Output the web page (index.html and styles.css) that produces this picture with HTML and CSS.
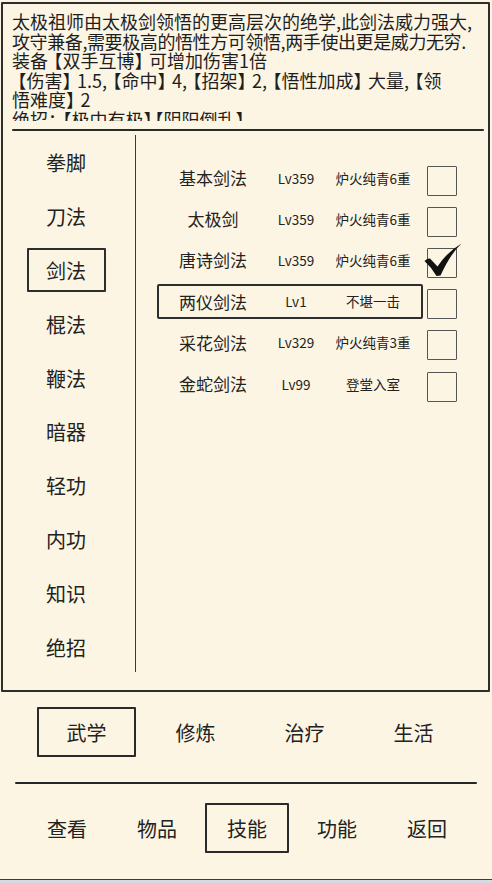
FILE: index.html
```html
<!DOCTYPE html>
<html lang="zh-CN">
<head>
<meta charset="UTF-8">
<meta name="viewport" content="width=device-width, initial-scale=1.0">
<title>技能 - 武学</title>
<link rel="stylesheet" href="styles.css">
</head>
<body>
<div class="frame">
	<div class="desc">
		太极祖师由太极剑领悟的更高层次的绝学,此剑法威力强大,<br>
		<span class="tight">攻守兼备,需要极高的悟性方可领悟,两手使出更是威力无穷.</span><br>
		装备<i class="l">【</i>双手互博<i class="r">】</i>可增加伤害1倍<br>
		<i class="l">【</i>伤害<i class="r">】</i>1.5,<i class="l">【</i>命中<i class="r">】</i>4,<i class="l">【</i>招架<i class="r">】</i>2,<i class="l">【</i>悟性加成<i class="r">】</i>大量,<i class="l">【</i>领<br>
		悟难度<i class="r">】</i>2<br>
		绝招：<i class="l">【</i>极中有极<i class="r">】</i><i class="l">【</i>阴阳倒乱<i class="r">】</i>
	</div>
	<div class="rule"></div>
	<div class="body">
		<ul class="kinds">
			<li><span>拳脚</span></li>
			<li><span>刀法</span></li>
			<li class="on"><span>剑法</span></li>
			<li><span>棍法</span></li>
			<li><span>鞭法</span></li>
			<li><span>暗器</span></li>
			<li><span>轻功</span></li>
			<li><span>内功</span></li>
			<li><span>知识</span></li>
			<li><span>绝招</span></li>
		</ul>
		<div class="skills">
			<div class="row">
				<div class="info"><span class="name">基本剑法</span><span class="lv">Lv359</span><span class="rank">炉火纯青6重</span></div>
				<span class="box"></span>
			</div>
			<div class="row">
				<div class="info"><span class="name">太极剑</span><span class="lv">Lv359</span><span class="rank">炉火纯青6重</span></div>
				<span class="box"></span>
			</div>
			<div class="row">
				<div class="info"><span class="name">唐诗剑法</span><span class="lv">Lv359</span><span class="rank">炉火纯青6重</span></div>
				<span class="box">
					<svg class="tick" width="38" height="34" viewBox="0 0 38 34"><path d="M0.5 18 Q3 15 6 15.5 L13.5 23.5 Q23 9 37.5 0.5 Q27 10 16.5 32.5 L12.5 33 Q8 25 0.5 18 Z" fill="#111"/></svg>
				</span>
			</div>
			<div class="row on">
				<div class="info"><span class="name">两仪剑法</span><span class="lv">Lv1</span><span class="rank">不堪一击</span></div>
				<span class="box"></span>
			</div>
			<div class="row">
				<div class="info"><span class="name">采花剑法</span><span class="lv">Lv329</span><span class="rank">炉火纯青3重</span></div>
				<span class="box"></span>
			</div>
			<div class="row">
				<div class="info"><span class="name">金蛇剑法</span><span class="lv">Lv99</span><span class="rank">登堂入室</span></div>
				<span class="box"></span>
			</div>
		</div>
	</div>
</div>

<div class="tabs">
	<span class="on">武学</span>
	<span>修炼</span>
	<span>治疗</span>
	<span>生活</span>
</div>

<div class="line"></div>

<div class="nav">
	<span>查看</span>
	<span>物品</span>
	<span class="on">技能</span>
	<span>功能</span>
	<span>返回</span>
</div>

<div class="strip"></div>
</body>
</html>
```

FILE: styles.css
```css
html, body {
	margin: 0;
	padding: 0;
}
body {
	width: 492px;
	height: 883px;
	overflow: hidden;
	background: #fcf5e4;
	color: #222;
	font-family: "Noto Sans CJK SC", "Noto Sans", sans-serif;
}

/* big sketch frame */
.frame {
	margin: 2px 2px 0 1px;
	height: 690px;
	box-sizing: border-box;
	border: 2px solid #2e2e2e;
	border-radius: 1px;
}
.desc {
	height: 117px;
	box-sizing: border-box;
	padding: 8px 2px 0 9px;
	overflow: hidden;
	font-size: 18px;
	line-height: 19.6px;
	white-space: nowrap;
	color: #1e1e1e;
}
.desc .tight {
	letter-spacing: -0.4px;
}
/* the game font draws the brackets narrow */
.desc i {
	font-style: normal;
}
.desc i.l {
	margin-left: -3.5px;
}
.desc i.r {
	margin-right: -3.5px;
}
.rule {
	height: 2px;
	margin: 8px 4px 0 9px;
	background: #2a2a2a;
	border-radius: 1px;
}
.body {
	display: flex;
	padding-top: 4px;
}

/* left column */
.kinds {
	list-style: none;
	margin: 0;
	padding: 1px 6px 0 0;
	width: 126px;
	height: 536px;
	border-right: 1.5px solid #3a3a3a;
}
.kinds li {
	height: 53.8px;
	display: flex;
	align-items: center;
	justify-content: center;
	font-size: 20px;
}
.kinds li span {
	display: flex;
	align-items: center;
	justify-content: center;
	width: 79px;
	height: 44px;
	box-sizing: border-box;
	border: 2px solid transparent;
}
.kinds li.on span {
	border-color: #2e2e2e;
	border-radius: 1px;
}

/* skill list */
.skills {
	padding: 22px 0 0 21px;
}
.row {
	display: flex;
	align-items: center;
	height: 41.2px;
}
.info {
	display: flex;
	align-items: center;
	width: 266px;
	height: 35px;
	box-sizing: border-box;
	border: 2px solid transparent;
}
.row.on .info {
	border-color: #2e2e2e;
	border-radius: 2px;
}
.info span {
	text-align: center;
	white-space: nowrap;
}
.name {
	width: 108px;
	font-size: 17px;
}
.lv {
	width: 58px;
	font-size: 13.5px;
}
.rank {
	width: 96px;
	font-size: 13.5px;
}
.box {
	position: relative;
	width: 30px;
	height: 30px;
	margin: 6px 0 0 4px;
	box-sizing: border-box;
	border: 1.5px solid #555;
	border-radius: 1px;
}
.tick {
	position: absolute;
	left: -4px;
	top: -6px;
}

/* bottom tabs */
.tabs {
	display: flex;
	margin: 15px 0 0 37px;
}
.tabs span,
.nav span {
	display: flex;
	align-items: center;
	justify-content: center;
	height: 50px;
	box-sizing: border-box;
	border: 2px solid transparent;
	font-size: 20px;
}
.tabs span {
	width: 99px;
	margin-right: 10px;
}
.tabs span.on,
.nav span.on {
	border-color: #2a2a2a;
	border-radius: 1px;
}
.line {
	height: 2px;
	margin: 25px 15px 0 15px;
	background: #262626;
	border-radius: 1px;
}
.nav {
	display: flex;
	margin: 19px 0 0 22px;
}
.nav span {
	width: 84px;
	margin: 0 3px;
}
.strip {
	margin-top: 26px;
	height: 4px;
	border-top: 1px solid #3c3c3c;
	background: #d6dbe3;
}
```
